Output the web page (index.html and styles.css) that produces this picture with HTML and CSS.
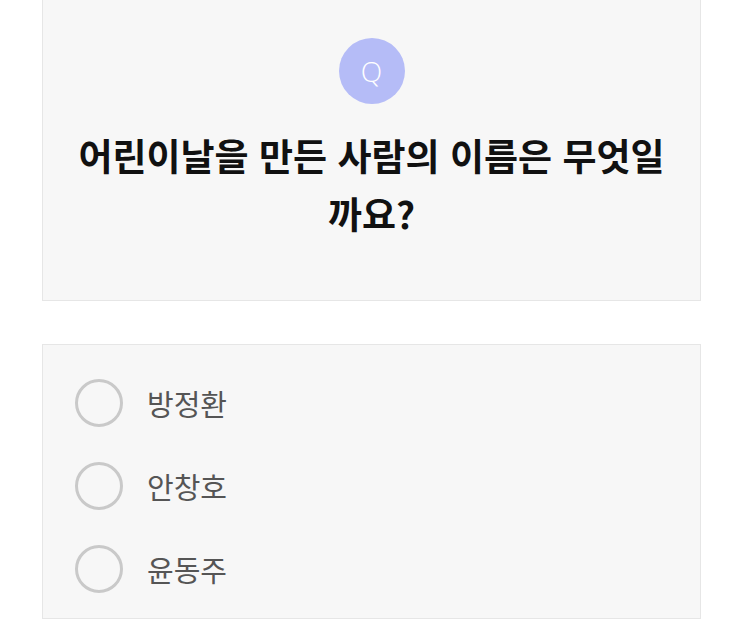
FILE: index.html
```html
<!DOCTYPE html>
<html lang="ko">
<head>
    <meta charset="UTF-8">
    <meta name="viewport" content="width=device-width, initial-scale=1.0">
    <title>퀴즈</title>
    <link rel="stylesheet" href="styles.css">
</head>
<body>
    <div class="question-card">
        <div class="q-badge">Q</div>
        <h2 class="question">어린이날을 만든 사람의 이름은 무엇일까요?</h2>
    </div>

    <div class="answer-card">
        <label class="option"><span class="radio"></span><span class="option-text">방정환</span></label>
        <label class="option"><span class="radio"></span><span class="option-text">안창호</span></label>
        <label class="option"><span class="radio"></span><span class="option-text">윤동주</span></label>
    </div>
</body>
</html>
```

FILE: styles.css
```css
body {
    margin: 0;
    background: #fff;
    font-family: "Noto Sans CJK KR", "Noto Sans", sans-serif;
}
.question-card {
    margin: 0 42px;
    padding: 38px 30px 58px;
    background: #f7f7f7;
    border: 1px solid #e6e6e6;
    border-top: none;
    text-align: center;
}
.q-badge {
    width: 66px;
    height: 66px;
    margin: 0 auto;
    border-radius: 50%;
    background: #b5bcf7;
    color: #fff;
    font-family: "Open Sans", sans-serif;
    font-size: 28px;
    font-weight: 300;
    line-height: 66px;
}
.question {
    margin: 22px 0 0;
    font-size: 37px;
    font-weight: bold;
    line-height: 58px;
    color: #111;
}
.answer-card {
    margin: 43px 42px 0;
    padding: 16px 0 8px 32px;
    background: #f7f7f7;
    border: 1px solid #e6e6e6;
}
.option {
    display: flex;
    align-items: center;
    height: 83px;
}
.radio {
    width: 42px;
    height: 42px;
    border: 3px solid #c9c9c9;
    border-radius: 50%;
    box-sizing: content-box;
}
.option-text {
    margin-left: 24px;
    font-size: 29px;
    color: #555;
}
```
